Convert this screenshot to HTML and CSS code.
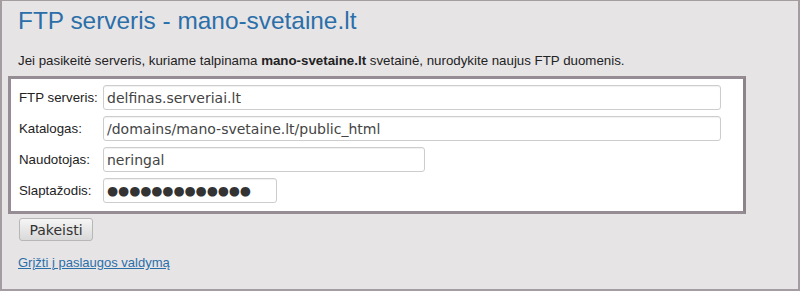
FILE: index.html
```html
<!DOCTYPE html>
<html lang="lt">
<head>
    <meta charset="UTF-8">
    <title>FTP serveris - mano-svetaine.lt</title>
    <link rel="stylesheet" href="styles.css">
</head>
<body>
    <div class="page">
        <h1>FTP serveris - mano-svetaine.lt</h1>
        <p class="intro">Jei pasikeitė serveris, kuriame talpinama <b>mano-svetaine.lt</b> svetainė, nurodykite naujus FTP duomenis.</p>

        <form class="ftp-form">
            <div class="fields">
                <div class="row">
                    <label>FTP serveris:</label>
                    <input type="text" class="wide" value="delfinas.serveriai.lt">
                </div>
                <div class="row">
                    <label>Katalogas:</label>
                    <input type="text" class="wide" value="/domains/mano-svetaine.lt/public_html">
                </div>
                <div class="row">
                    <label>Naudotojas:</label>
                    <input type="text" class="medium" value="neringal">
                </div>
                <div class="row">
                    <label>Slaptažodis:</label>
                    <input type="text" class="short secret" value="●●●●●●●●●●●●●">
                </div>
            </div>
            <button type="button" class="btn">Pakeisti</button>
        </form>

        <a href="#" class="back-link">Grįžti į paslaugos valdymą</a>
    </div>
</body>
</html>
```

FILE: styles.css
```css
body {
    margin: 0;
    padding: 0;
    font-family: "Liberation Sans", Arial, sans-serif;
    font-size: 13.3px;
    color: #222;
}
.page {
    box-sizing: border-box;
    height: 291px;
    background-color: #e7e4e6;
    border: 2px solid #a39ca1;
    border-top-width: 1px;
    padding: 6px 0 0 16px;
}
h1 {
    margin: 0;
    font-size: 24.4px;
    font-weight: normal;
    line-height: 28px;
    color: #2b6fa9;
}
.intro {
    margin: 18px 0 0 0;
    line-height: 15px;
}
.ftp-form {
    margin-top: 8px;
}
.fields {
    width: 716px;
    margin-left: -10px;
    background-color: #fff;
    border: 3px solid #968c93;
    border-right-color: #8d838a;
    padding: 6px 8px 8px 8px;
    display: flex;
    flex-direction: column;
    gap: 6px;
}
.row {
    display: flex;
    align-items: center;
}
.row label {
    width: 84px;
    color: #222;
}
.row input {
    box-sizing: border-box;
    height: 25px;
    border: 1px solid #cdcdcd;
    border-radius: 3px;
    padding: 0 3px;
    font-family: "DejaVu Sans", sans-serif;
    font-size: 14px;
    color: #444;
    box-shadow: inset 0 1px 1px rgba(0, 0, 0, 0.06);
}
.row input.wide {
    width: 618px;
}
.row input.medium {
    width: 322px;
}
.row input.short {
    width: 174px;
}
.row input.secret {
    color: #333;
    font-size: 12.7px;
}
.btn {
    margin: 4px 0 0 1px;
    height: 23px;
    width: 74px;
    padding: 0;
    font-family: "DejaVu Sans", sans-serif;
    font-size: 14px;
    color: #333;
    background: linear-gradient(#f5f5f5, #d9d9d9);
    border: 1px solid #b7b7b7;
    border-radius: 3px;
}
.back-link {
    display: inline-block;
    margin-top: 14px;
    font-size: 13px;
    color: #2b6fa9;
    line-height: 15px;
}
```
